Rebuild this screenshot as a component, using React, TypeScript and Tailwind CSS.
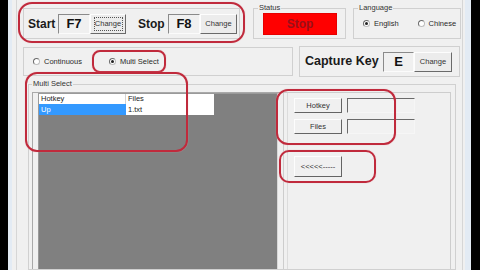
import React from 'react';

// Classic WinForms hotkey tool: start/stop keys, status, language, multi select list

function Radio({ label, checked = false }: { label: string; checked?: boolean }) {
  return (
    <div className="flex items-center gap-[4px] text-[7.5px] leading-none text-[#2a2a2a]">
      <span className="flex h-[7px] w-[7px] items-center justify-center rounded-full border border-t-[#6a6a6a] border-l-[#6a6a6a] border-r-[#bdbdbd] border-b-[#bdbdbd] bg-white">
        {checked && <span className="h-[3px] w-[3px] rounded-full bg-[#222]" />}
      </span>
      {label}
    </div>
  );
}

function KeyBox({ k, w = 'w-[32px]' }: { k: string; w?: string }) {
  return (
    <div
      className={`flex h-[20px] ${w} items-center justify-center border border-t-[#8a8a8a] border-l-[#8a8a8a] border-r-[#fbfbfb] border-b-[#fbfbfb] bg-[#f0f0f0] text-[13px] leading-none font-bold text-[#111]`}
    >
      {k}
    </div>
  );
}

function ChangeButton({ focus = false, w = 'w-[36px]' }: { focus?: boolean; w?: string }) {
  return (
    <div
      className={`flex h-[20px] ${w} items-center justify-center border border-t-[#fdfdfd] border-l-[#fdfdfd] border-r-[#6a6a6a] border-b-[#6a6a6a] bg-[#ececec] text-[7.5px] leading-none text-[#333]`}
    >
      {focus ? (
        <span className="flex h-[14px] w-[29px] items-center justify-center border border-dotted border-[#555]">
          Change
        </span>
      ) : (
        'Change'
      )}
    </div>
  );
}

function FlatButton({ label, h = 'h-[15px]' }: { label: string; h?: string }) {
  return (
    <div
      className={`flex ${h} w-[48px] items-center justify-center border border-t-[#fdfdfd] border-l-[#fdfdfd] border-r-[#646464] border-b-[#646464] bg-[#f0f0f0] text-[7.5px] leading-none text-[#333]`}
    >
      {label}
    </div>
  );
}

function TextField() {
  return (
    <div className="ml-[5px] h-[15px] w-[68px] border border-t-[#6a6a6a] border-l-[#6a6a6a] border-r-[#f6f6f6] border-b-[#f6f6f6] bg-[#f2f2f2]" />
  );
}

function Mark({ className }: { className: string }) {
  return (
    <div
      className={`pointer-events-none absolute border-2 border-[#c02a3c] shadow-[0_0_1px_#e9a0a8] ${className}`}
    />
  );
}

export default function App() {
  return (
    <div className="relative flex h-[270px] w-[480px] overflow-hidden bg-black font-['Liberation_Sans',Arial,sans-serif] text-[#1a1a1a]">
      <div className="ml-[8px] flex w-[463px] shrink-0 border-l-[4px] border-r-[6px] border-[#e3ebf4] bg-[#f0f0f0]">
        <div className="ml-[4px] mr-[2px] flex flex-1 flex-col border-x border-[#d6d6d6]">
          {/* row 1 */}
          <div className="mt-[4px] flex items-start">
            <div className="ml-[6px] mt-[4px] flex h-[31px] w-[217px] items-center border border-[#d0d0d0] pl-[4px]">
              <span className="w-[30px] text-[12px] leading-none font-bold">Start</span>
              <KeyBox k="F7" />
              <ChangeButton focus />
              <span className="ml-[12px] w-[30px] text-[12px] leading-none font-bold">Stop</span>
              <KeyBox k="F8" />
              <ChangeButton w="w-[37px]" />
            </div>

            <fieldset className="ml-[13px] h-[35px] w-[93px] border border-[#d0d0d0]">
              <legend className="ml-[4px] px-[1px] text-[7.5px] leading-[8px] text-[#333]">Status</legend>
              <div className="ml-[9px] mt-[1px] flex h-[22px] w-[74px] items-center justify-center border border-[#e60000] bg-[#ff0000] text-[12px] leading-none font-bold text-[#9a0f18]">
                Stop
              </div>
            </fieldset>

            <fieldset className="ml-[7px] h-[35px] w-[108px] border border-[#d0d0d0]">
              <legend className="ml-[4px] px-[1px] text-[7.5px] leading-[8px] text-[#333]">Language</legend>
              <div className="mt-[8px] flex items-center pl-[9px]">
                <Radio label="English" checked />
                <div className="ml-[19px]">
                  <Radio label="Chinese" />
                </div>
              </div>
            </fieldset>
          </div>

          {/* row 2 */}
          <div className="mt-[7px] flex h-[31px] items-center">
            <div className="ml-[6px] flex h-[29px] w-[270px] items-center border border-[#d0d0d0] pl-[9px]">
              <Radio label="Continuous" />
              <div className="ml-[27px]">
                <Radio label="Multi Select" checked />
              </div>
            </div>

            <div className="ml-[6px] flex h-[31px] w-[161px] items-center border border-[#d0d0d0] pl-[5px]">
              <span className="w-[78px] text-[12.5px] leading-none font-bold">Capture Key</span>
              <KeyBox k="E" w="w-[31px]" />
              <ChangeButton w="w-[38px]" />
            </div>
          </div>

          {/* multi select group */}
          <fieldset className="mt-[3px] ml-[11px] flex w-[428px] flex-1 flex-col border border-[#d0d0d0]">
            <legend className="ml-[3px] px-[1px] text-[7.5px] leading-[8px] text-[#333]">Multi Select</legend>
            <div className="flex flex-1 pl-[3px] pt-[4px]">
              <div className="flex w-[249px] flex-col border-t border-l border-[#a9a9a9] pl-[5px]">
                <div className="flex w-[240px] flex-1 flex-col border-t border-l border-r border-t-[#9a9a9a] border-l-[#9a9a9a] border-r-[#d8d8d8] bg-[#808080]">
                  <div className="flex h-[10px] w-[175px] bg-white text-[7.5px] leading-[10px] text-[#222]">
                    <div className="w-[87px] border-r border-[#d3d3d3] pl-[2px]">Hotkey</div>
                    <div className="w-[88px] pl-[2px]">Files</div>
                  </div>
                  <div className="flex h-[11px] w-[175px] text-[7.5px] leading-[11px]">
                    <div className="w-[87px] bg-[#3399ff] pl-[2px] text-white">Up</div>
                    <div className="w-[88px] bg-white pl-[2px] text-[#222]">1.txt</div>
                  </div>
                </div>
              </div>

              <div className="ml-[2px] flex w-[168px] border-t border-l border-r border-[#cdcdcd]">
                <div className="ml-[3px] flex flex-1 flex-col border-l border-[#dcdcdc] pl-[6px] pt-[5px]">
                  <div className="flex items-center">
                    <FlatButton label="Hotkey" />
                    <TextField />
                  </div>
                  <div className="mt-[6px] flex items-center">
                    <FlatButton label="Files" />
                    <TextField />
                  </div>
                  <div className="mt-[22px]">
                    <FlatButton label="<<<<<-----" h="h-[21px]" />
                  </div>
                </div>
              </div>
            </div>
          </fieldset>
        </div>
      </div>
      <div className="w-[9px] shrink-0 bg-black" />

      {/* hand-drawn annotations */}
      <Mark className="left-[18px] top-[2px] h-[41px] w-[227px] rounded-[14px]" />
      <Mark className="left-[92px] top-[50px] h-[23px] w-[74px] rounded-[8px]" />
      <Mark className="left-[25px] top-[72px] h-[80px] w-[163px] rounded-[12px]" />
      <Mark className="left-[276px] top-[89px] h-[56px] w-[120px] rounded-[12px]" />
      <Mark className="left-[279px] top-[150px] h-[33px] w-[97px] rounded-[10px]" />
    </div>
  );
}
